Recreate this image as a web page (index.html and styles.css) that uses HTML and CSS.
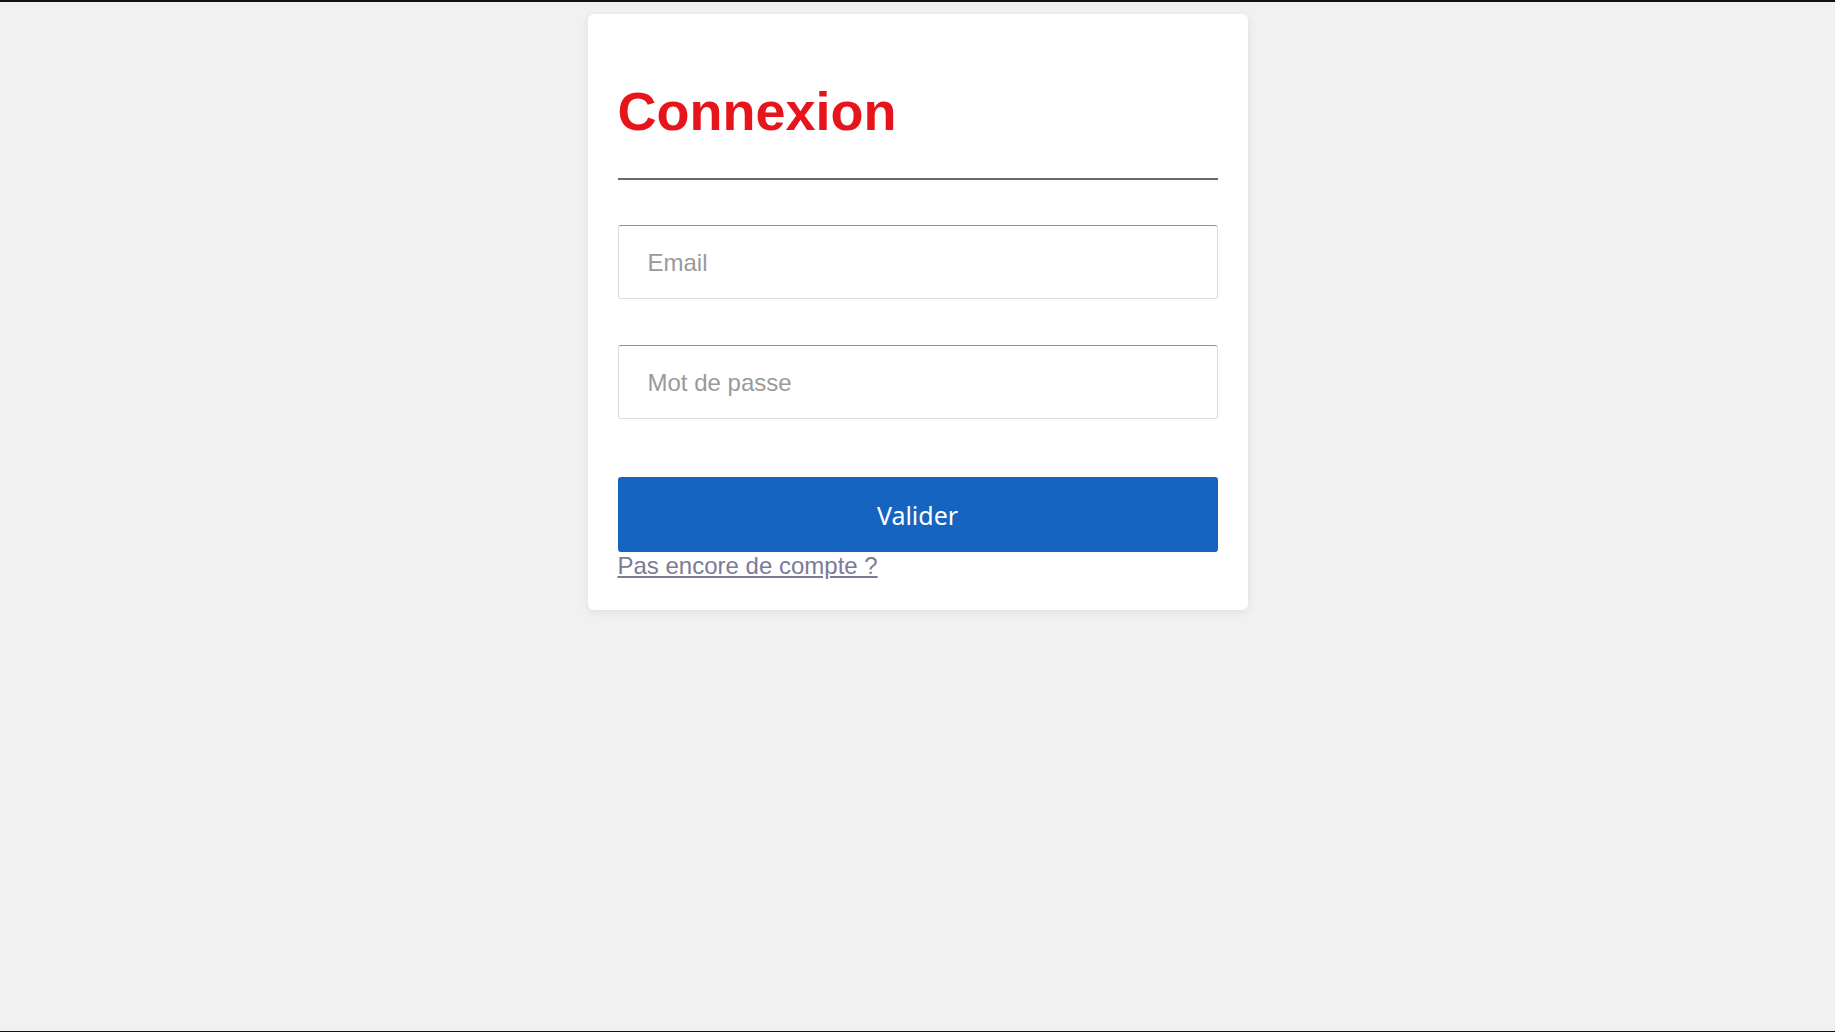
FILE: index.html
```html
<!DOCTYPE html>
<html lang="fr">
<head>
<meta charset="utf-8">
<title>Connexion</title>
<link rel="stylesheet" href="styles.css">
</head>
<body>
<main class="card">
  <h1 class="title">Connexion</h1>
  <hr class="divider">
  <form class="form">
    <input class="field" type="email" placeholder="Email">
    <input class="field field-password" type="password" placeholder="Mot de passe">
    <button class="submit" type="button">Valider</button>
  </form>
  <a class="signup" href="#">Pas encore de compte ?</a>
</main>
</body>
</html>
```

FILE: styles.css
```css
html {
  height: 100%;
}
body {
  margin: 0;
  min-height: 100%;
  box-sizing: border-box;
  background: #f1f1f1;
  border-top: 2px solid #111;
  border-bottom: 1px solid #111;
  font-family: "Liberation Sans", Arial, sans-serif;
  display: flex;
  flex-direction: column;
  align-items: center;
}
.card {
  margin-top: 12px;
  width: 660px;
  box-sizing: border-box;
  padding: 30px;
  background: #fff;
  border-radius: 6px;
  box-shadow: 0 2px 8px rgba(0, 0, 0, 0.08);
  display: flex;
  flex-direction: column;
}
.title {
  margin: 36px 0;
  font-size: 54px;
  font-weight: bold;
  line-height: 62px;
  color: #e8141c;
}
.divider {
  margin: 0;
  height: 0;
  border: 0;
  border-top: 2px solid #6b6b6b;
}
.form {
  margin-top: 45px;
  display: flex;
  flex-direction: column;
}
.field {
  height: 74px;
  box-sizing: border-box;
  margin: 0;
  padding: 1px 29px 0;
  border: 1px solid #dcdcdc;
  border-top-color: #919191;
  border-radius: 3px;
  font-family: "Liberation Sans", Arial, sans-serif;
  font-size: 24px;
  color: #333;
  background: #fff;
  outline: none;
}
.field::placeholder {
  color: #9a9a9a;
}
.field-password {
  margin-top: 46px;
}
.submit {
  margin-top: 58px;
  height: 75px;
  border: 0;
  border-radius: 3px;
  background: #1565c0;
  color: #fff;
  font-family: "Noto Sans", "Open Sans", sans-serif;
  font-size: 25px;
  padding: 0;
  cursor: pointer;
}
.signup {
  align-self: flex-start;
  font-size: 24px;
  line-height: 28px;
  color: #7b7b98;
  text-decoration: underline;
}
```
